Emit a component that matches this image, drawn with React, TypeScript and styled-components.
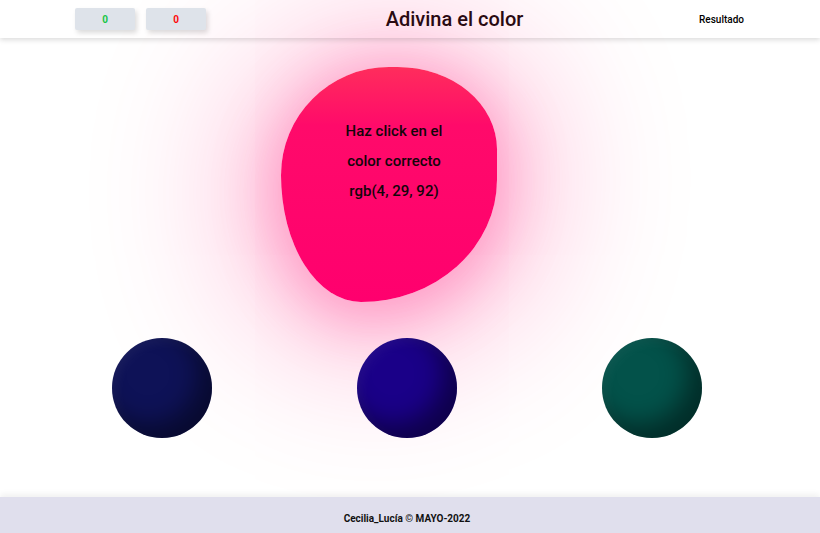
import styled, { createGlobalStyle } from "styled-components";

const GlobalStyle = createGlobalStyle`
  html, body {
    margin: 0;
    padding: 0;
    background: #ffffff;
    font-family: Roboto, "Liberation Sans", sans-serif;
  }
  #root {
    min-height: 100vh;
    display: flex;
    flex-direction: column;
    overflow: hidden;
  }
`;

const Header = styled.header`
  height: 38px;
  display: flex;
  align-items: center;
  justify-content: space-between;
  padding: 0 76px 0 75px;
  box-shadow: 0 2px 5px rgba(0, 0, 0, 0.14);
  position: relative;
  z-index: 2;
`;

const Scores = styled.div`
  display: flex;
  gap: 11px;
`;

const ScoreBox = styled.div<{ $color: string }>`
  width: 60px;
  height: 22px;
  display: flex;
  align-items: center;
  justify-content: center;
  background: #dee3ea;
  border-radius: 2px;
  box-shadow: 2px 3px 5px rgba(0, 0, 0, 0.14);
  color: ${(p) => p.$color};
  font-size: 10px;
  font-weight: 700;
`;

const Title = styled.h1`
  margin: 0 0 0 4px;
  font-size: 20px;
  font-weight: 500;
  color: #2a0a12;
`;

const ResultLink = styled.span`
  font-size: 10px;
  font-weight: 500;
  color: #000;
`;

const Main = styled.main`
  flex: 1;
  display: flex;
  flex-direction: column;
  align-items: center;
  padding-top: 29px;
`;

const Blob = styled.div`
  width: 216px;
  height: 235px;
  margin-right: 42px;
  box-sizing: border-box;
  padding: 49px 0 0 10px;
  border-radius: 50% 46% 63% 37% / 46% 35% 52% 54%;
  background: linear-gradient(180deg, #ff2d5c 0%, #ff0a6a 25%, #ff006e 100%);
  box-shadow: 0 8px 155px 40px rgba(255, 0, 110, 0.3),
    0 10px 60px 10px rgba(255, 0, 110, 0.25);
  text-align: center;
  position: relative;
  z-index: 1;
`;

const BlobLine = styled.p`
  margin: 0;
  font-size: 15px;
  line-height: 30px;
  font-weight: 500;
  color: #12050a;
`;

const Choices = styled.div`
  width: 735px;
  margin-top: 36px;
  margin-left: -7px;
  display: grid;
  grid-template-columns: repeat(3, 1fr);
  justify-items: center;
  position: relative;
  z-index: 1;
`;

const ColorBall = styled.button<{ $color: string }>`
  width: 100px;
  height: 100px;
  border: none;
  padding: 0;
  border-radius: 50%;
  background: ${(p) => p.$color};
  box-shadow: inset -14px -14px 24px rgba(0, 0, 0, 0.45),
    inset 4px 4px 12px rgba(255, 255, 255, 0.05);
  cursor: pointer;
`;

const Footer = styled.footer`
  height: 36px;
  box-sizing: border-box;
  display: flex;
  align-items: center;
  justify-content: center;
  padding: 7px 6px 0 0;
  background: #e0dfed;
  box-shadow: 0 -3px 6px rgba(0, 0, 0, 0.06);
  font-size: 10px;
  font-weight: 700;
  color: #111;
  position: relative;
  z-index: 2;
`;

const choices = ["#0e1257", "#1a0088", "#03524a"];

export default function App() {
  return (
    <>
      <GlobalStyle />
      <Header>
        <Scores>
          <ScoreBox $color="#18c646">0</ScoreBox>
          <ScoreBox $color="#ff0a0a">0</ScoreBox>
        </Scores>
        <Title>Adivina el color</Title>
        <ResultLink>Resultado</ResultLink>
      </Header>
      <Main>
        <Blob>
          <BlobLine>Haz click en el</BlobLine>
          <BlobLine>color correcto</BlobLine>
          <BlobLine>rgb(4, 29, 92)</BlobLine>
        </Blob>
        <Choices>
          {choices.map((c) => (
            <ColorBall key={c} $color={c} aria-label={c} />
          ))}
        </Choices>
      </Main>
      <Footer>Cecilia_Lucía © MAYO-2022</Footer>
    </>
  );
}
